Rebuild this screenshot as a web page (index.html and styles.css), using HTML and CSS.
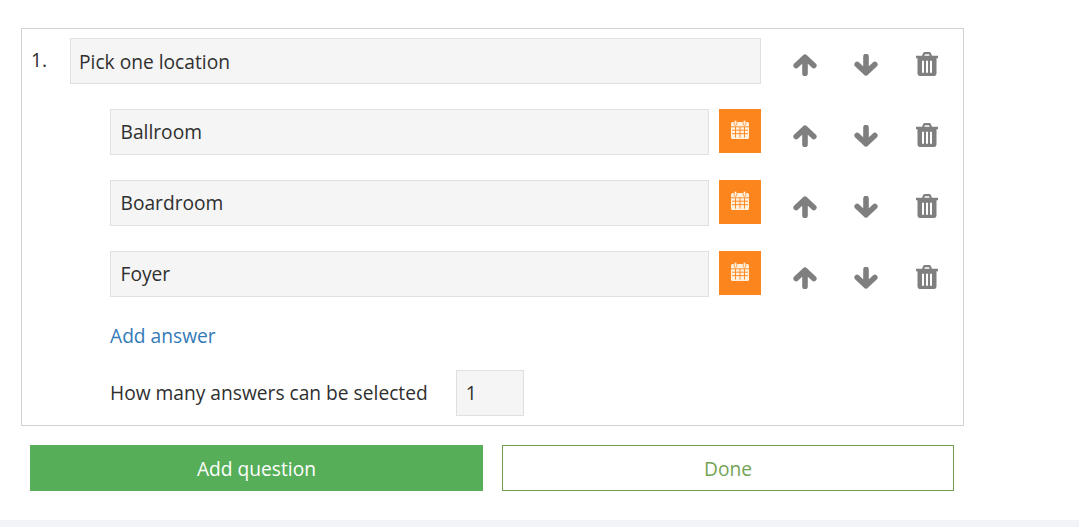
FILE: index.html
```html
<!DOCTYPE html>
<html lang="en">
<head>
<meta charset="utf-8">
<title>Question editor</title>
<link rel="stylesheet" href="styles.css">
</head>
<body>
<svg class="defs" width="0" height="0" aria-hidden="true">
  <symbol id="i-up" viewBox="0 0 24 22"><path d="M12 19.500V3.200M3.200 11.500 12 3.200l8.800 8.300" fill="none" stroke="currentColor" stroke-width="5.600" stroke-linecap="round" stroke-linejoin="round"/></symbol>
  <symbol id="i-down" viewBox="0 0 24 22"><path d="M12 2.500v16.300M3.200 10.500 12 18.800l8.800-8.300" fill="none" stroke="currentColor" stroke-width="5.600" stroke-linecap="round" stroke-linejoin="round"/></symbol>
  <symbol id="i-trash" viewBox="0 0 22 22" preserveAspectRatio="none"><path fill="currentColor" fill-rule="evenodd" d="M0 3.500h6l1.300-2.700C7.600.3 8 0 8.700 0h4.600c.7 0 1.100.3 1.400.8L16 3.500h6v2.200h-1.500v13.800c0 1.400-1 2.500-2.300 2.500H3.800c-1.300 0-2.300-1.100-2.300-2.500V5.700H0V3.500Zm8.300 0h5.400l-.7-1.500H9l-.7 1.500ZM6 8v11h2V8H6Zm4 0v11h2V8h-2Zm4 0v11h2V8h-2Z"/></symbol>
  <symbol id="i-cal" viewBox="0 0 18 19">
    <rect y="2" width="18" height="17" rx="1.500" fill="currentColor"/>
    <path d="M0 6.800h18M1 10.200h16M1 13.600h16M4.500 6.800v10.800M9 6.800v10.800M13.500 6.800v10.800" fill="none" stroke="#fd851d" stroke-width=".9"/>
    <rect x="3.200" y=".3" width="2.600" height="5" rx="1.300" fill="currentColor" stroke="#fd851d" stroke-width=".7"/>
    <rect x="12.200" y=".3" width="2.600" height="5" rx="1.300" fill="currentColor" stroke="#fd851d" stroke-width=".7"/>
  </symbol>
</svg>

<main class="page">
  <section class="question-box">
    <div class="row">
      <span class="number">1.</span>
      <div class="field field-question">Pick one location</div>
      <div class="actions">
        <button class="action"><svg class="icon-arrow"><use href="#i-up"/></svg></button>
        <button class="action"><svg class="icon-arrow"><use href="#i-down"/></svg></button>
        <button class="action"><svg class="icon-trash"><use href="#i-trash"/></svg></button>
      </div>
    </div>

    <div class="row row-answer">
      <div class="field field-answer">Ballroom</div>
      <button class="calendar"><svg class="icon-cal"><use href="#i-cal"/></svg></button>
      <div class="actions">
        <button class="action"><svg class="icon-arrow"><use href="#i-up"/></svg></button>
        <button class="action"><svg class="icon-arrow"><use href="#i-down"/></svg></button>
        <button class="action"><svg class="icon-trash"><use href="#i-trash"/></svg></button>
      </div>
    </div>

    <div class="row row-answer">
      <div class="field field-answer">Boardroom</div>
      <button class="calendar"><svg class="icon-cal"><use href="#i-cal"/></svg></button>
      <div class="actions">
        <button class="action"><svg class="icon-arrow"><use href="#i-up"/></svg></button>
        <button class="action"><svg class="icon-arrow"><use href="#i-down"/></svg></button>
        <button class="action"><svg class="icon-trash"><use href="#i-trash"/></svg></button>
      </div>
    </div>

    <div class="row row-answer">
      <div class="field field-answer">Foyer</div>
      <button class="calendar"><svg class="icon-cal"><use href="#i-cal"/></svg></button>
      <div class="actions">
        <button class="action"><svg class="icon-arrow"><use href="#i-up"/></svg></button>
        <button class="action"><svg class="icon-arrow"><use href="#i-down"/></svg></button>
        <button class="action"><svg class="icon-trash"><use href="#i-trash"/></svg></button>
      </div>
    </div>

    <a class="add-answer" href="#">Add answer</a>

    <div class="count-row">
      <span>How many answers can be selected</span>
      <div class="field field-count">1</div>
    </div>
  </section>

  <div class="buttons">
    <button class="btn btn-add">Add question</button>
    <button class="btn btn-done">Done</button>
  </div>
</main>
<div class="footer-strip"></div>
</body>
</html>
```
FILE: styles.css
```css
* {
  box-sizing: border-box;
}

html,
body {
  margin: 0;
  height: 100%;
  overflow: hidden;
}

body {
  display: flex;
  flex-direction: column;
  background: #fff;
  color: #2f2f2f;
  font-family: "Open Sans", sans-serif;
  font-size: 19.2px;
  line-height: 24px;
}

.defs {
  position: absolute;
}

.page {
  flex: 1;
  padding: 28px 0 0 21px;
}

.question-box {
  width: 943px;
  height: 398px;
  padding: 9px 0 0 9px;
  border: 1px solid #d2d2d2;
}

.row {
  display: flex;
  height: 46px;
  margin-bottom: 25px;
}

.row-answer {
  padding-left: 79px;
}

.number {
  width: 39px;
  padding-top: 10px;
}

.field {
  display: flex;
  align-items: center;
  height: 46px;
  background: #f5f5f5;
  border: 1px solid #e0e0e0;
}

.field-question {
  width: 691px;
  padding: 2px 0 0 8px;
}

.field-answer {
  width: 599px;
  padding-left: 9.500px;
}

.field-count {
  width: 68px;
  padding-left: 9px;
}

.calendar {
  display: flex;
  align-items: center;
  justify-content: center;
  width: 42px;
  height: 44px;
  margin-left: 10px;
  padding: 0;
  border: 0;
  background: #fd851d;
  color: #fff0dc;
}

.icon-cal {
  width: 18px;
  height: 19px;
  margin-bottom: 3px;
}

.actions {
  display: grid;
  grid-template-columns: repeat(3, 61px);
  margin-left: 13px;
  padding-top: 14px;
}

.action {
  display: flex;
  justify-content: center;
  height: 24px;
  padding: 0;
  border: 0;
  background: none;
  color: #807f7f;
}

.icon-arrow {
  width: 24px;
  height: 22px;
  margin-top: 2px;
}

.icon-trash {
  width: 22px;
  height: 24px;
}

.add-answer {
  display: block;
  margin: 27px 0 0 79px;
  color: #337ab7;
  text-decoration: none;
}

.count-row {
  display: flex;
  align-items: center;
  gap: 28px;
  margin: 22px 0 0 79px;
}

.buttons {
  display: flex;
  gap: 19px;
  margin: 19px 0 0 9px;
}

.btn {
  height: 46px;
  padding: 1px 0 0;
  font: inherit;
}

.btn-add {
  width: 453px;
  border: 0;
  background: #56ae58;
  color: #fff;
}

.btn-done {
  width: 452px;
  border: 1px solid #6f9c50;
  background: #fff;
  color: #74a356;
}

.footer-strip {
  height: 7px;
  background: #f2f3f8;
}
```
